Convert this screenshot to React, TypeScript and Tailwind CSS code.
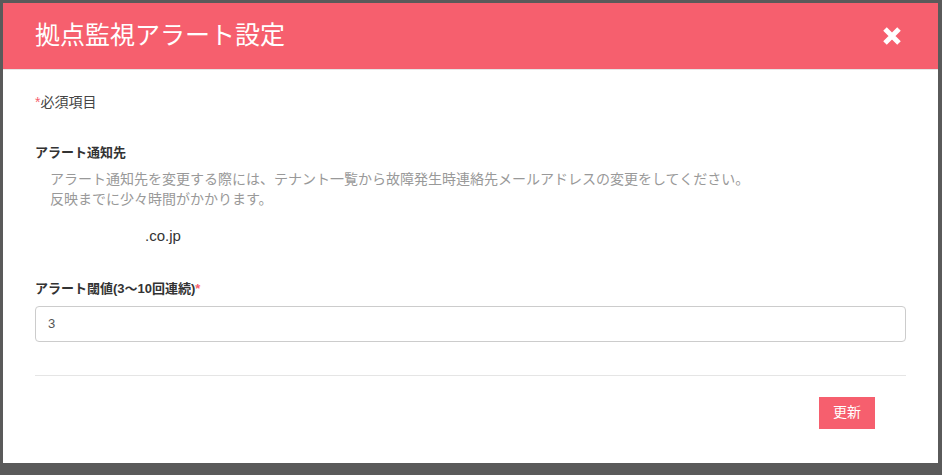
export default function App() {
  const f = { fontFamily: '"Liberation Sans", "Noto Sans CJK JP", sans-serif' };
  return (
    <div className="w-[942px] h-[475px] bg-[#5a5a5a] pt-[3px] pl-[3px] overflow-hidden" style={f}>
      <div className="w-[935px] h-[460px] bg-white flex flex-col">
        <div className="h-[67px] bg-[#f65f6e] flex items-center justify-between pl-[32px] pr-[36px] border-b border-[#e5e5e5]">
          <div className="text-white text-[25px]">拠点監視アラート設定</div>
          <svg width="20" height="20" viewBox="0 0 20 20"><path d="M3 3L17 17M17 3L3 17" stroke="white" strokeWidth="5" strokeLinecap="butt" /></svg>
        </div>
        <div className="px-[32px] flex flex-col">
          <div className="mt-[22px] text-[14px] text-[#444]"><span className="text-[#f65f6e]">*</span>必須項目</div>
          <div className="mt-[30px] text-[13px] font-bold text-[#333]">アラート通知先</div>
          <div className="mt-[6px] pl-[15px] text-[14px] text-[#999] leading-[20px]">
            <div>アラート通知先を変更する際には、テナント一覧から故障発生時連絡先メールアドレスの変更をしてください。</div>
            <div>反映までに少々時間がかかります。</div>
          </div>
          <div className="mt-[16px] pl-[110px] text-[15px] text-[#333]">.co.jp</div>
          <div className="mt-[32px] text-[13px] font-bold text-[#333]">アラート閾値(3〜10回連続)<span className="text-[#f65f6e]">*</span></div>
          <input defaultValue="3" className="mt-[7px] h-[36px] w-[871px] border border-[#ccc] rounded-[4px] px-[12px] text-[13px] text-[#555] outline-none" style={f} />
          <div className="mt-[33px] border-t border-[#e5e5e5] w-[871px]" />
          <div className="w-[871px] flex justify-end pr-[31px] mt-[21px]">
            <button className="h-[32px] px-[14px] bg-[#f65f6e] text-white text-[14px]" style={f}>更新</button>
          </div>
        </div>
      </div>
    </div>
  );
}
